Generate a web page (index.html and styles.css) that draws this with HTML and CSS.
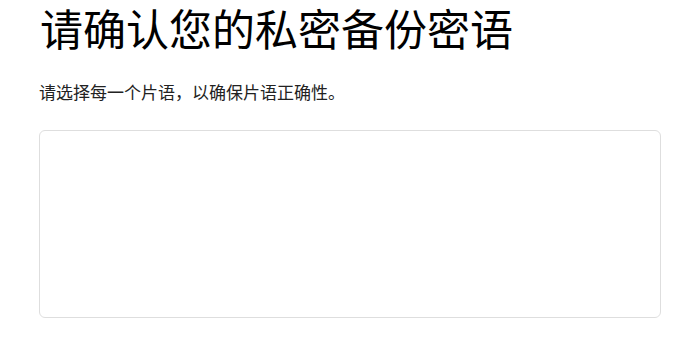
FILE: index.html
```html
<!DOCTYPE html>
<html lang="zh-CN">
<head>
<meta charset="utf-8">
<link rel="stylesheet" href="styles.css">
</head>
<body>
<main class="page">
  <h1 class="title">请确认您的私密备份密语</h1>
  <p class="subtitle">请选择每一个片语，以确保片语正确性。</p>
  <div class="phrase-box"></div>
</main>
</body>
</html>
```
FILE: styles.css
```css
html, body {
  margin: 0;
  padding: 0;
  background: #ffffff;
}
body {
  font-family: "Noto Sans CJK SC", "Noto Sans", sans-serif;
  color: #111111;
}
.page {
  padding: 0 39px;
  display: flex;
  flex-direction: column;
}
.title {
  margin: 0 0 0 1px;
  font-size: 43px;
  font-weight: 400;
  line-height: 54px;
  color: #000000;
}
.subtitle {
  margin: 26px 0 0 0;
  font-size: 17px;
  line-height: 24px;
  color: #222222;
}
.phrase-box {
  box-sizing: border-box;
  margin-top: 26px;
  width: 622px;
  height: 188px;
  border: 1px solid #dedede;
  border-radius: 6px;
}
```
